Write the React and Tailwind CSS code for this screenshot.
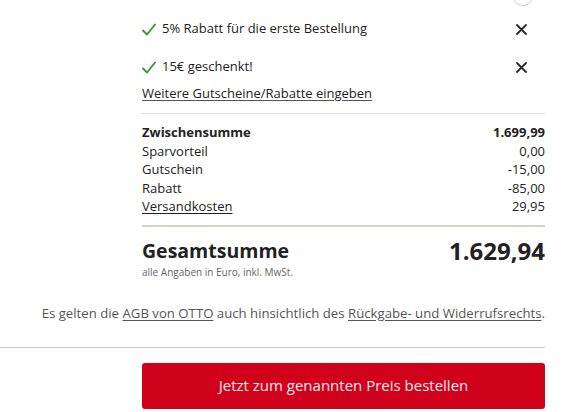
function Check() {
  return (
    <svg width="14" height="13" viewBox="0 0 14 13" fill="none" className="shrink-0">
      <path d="M1 7.5 L5 11.5 L13 1.5" stroke="#3f9a35" strokeWidth="2" strokeLinecap="round" strokeLinejoin="round" />
    </svg>
  );
}

function Close() {
  return (
    <svg width="11" height="11" viewBox="0 0 11 11" className="shrink-0">
      <path d="M1 1 L10 10 M10 1 L1 10" stroke="#2b2b2b" strokeWidth="1.8" strokeLinecap="round" />
    </svg>
  );
}

const coupons = ["5% Rabatt für die erste Bestellung", "15€ geschenkt!"];

const rows = [
  { label: "Sparvorteil", value: "0,00" },
  { label: "Gutschein", value: "-15,00" },
  { label: "Rabatt", value: "-85,00" },
  { label: "Versandkosten", value: "29,95", link: true },
];

export default function App() {
  return (
    <div className="w-[573px] h-[412px] overflow-hidden bg-white text-[#222] font-['Open_Sans',sans-serif] pr-[28px]">
      <div className="pl-[142px]">
        {/* circle button cut off above */}
        <div className="flex justify-end pr-[11px] h-[6px]">
          <div className="w-[22px] h-[22px] -mt-[16px] rounded-full border border-[#cfcfcf] bg-white" />
        </div>

        <ul className="mt-[11px]">
          {coupons.map((c, i) => (
            <li key={c} className={`flex items-center h-[24px] ${i > 0 ? "mt-[14px]" : ""}`}>
              <Check />
              <span className="ml-[6px] text-[13px] flex-1">{c}</span>
              <span className="pr-[18px]">
                <Close />
              </span>
            </li>
          ))}
        </ul>
        <a href="#" className="block mt-[2px] text-[13px] leading-[24px] underline underline-offset-2 decoration-[#555]">
          Weitere Gutscheine/Rabatte eingeben
        </a>

        <div className="mt-[8px] border-t border-[#dcdcdc]" />

        <div className="pt-[9px] text-[13px] leading-[18.5px]">
          <div className="flex justify-between font-bold">
            <span>Zwischensumme</span>
            <span>1.699,99</span>
          </div>
          {rows.map((r) => (
            <div key={r.label} className="flex justify-between">
              <span className={r.link ? "underline underline-offset-2" : ""}>{r.label}</span>
              <span>{r.value}</span>
            </div>
          ))}
        </div>

        <div className="mt-[9px] border-t-2 border-[#d9d2cb]" />

        <div className="flex justify-between items-center mt-[10px] font-bold leading-[28px]">
          <span className="text-[19.5px]">Gesamtsumme</span>
          <span className="text-[24px]">1.629,94</span>
        </div>
        <p className="text-[10px] leading-[14px] text-[#666]">alle Angaben in Euro, inkl. MwSt.</p>
      </div>

      <p className="mt-[24px] text-right text-[13.2px] leading-[20px] text-[#555]">
        Es gelten die <a href="#" className="underline underline-offset-2">AGB von OTTO</a> auch hinsichtlich des{" "}
        <a href="#" className="underline underline-offset-2">Rückgabe- und Widerrufsrechts</a>.
      </p>

      <div className="mt-[24px] border-t border-[#cccccc]" />

      <div className="pl-[142px] mt-[15px]">
        <button className="w-full h-[46px] rounded-[3px] bg-[#d0021b] text-[#fde8ea] text-[15px]">
          Jetzt zum genannten Preis bestellen
        </button>
      </div>
    </div>
  );
}
